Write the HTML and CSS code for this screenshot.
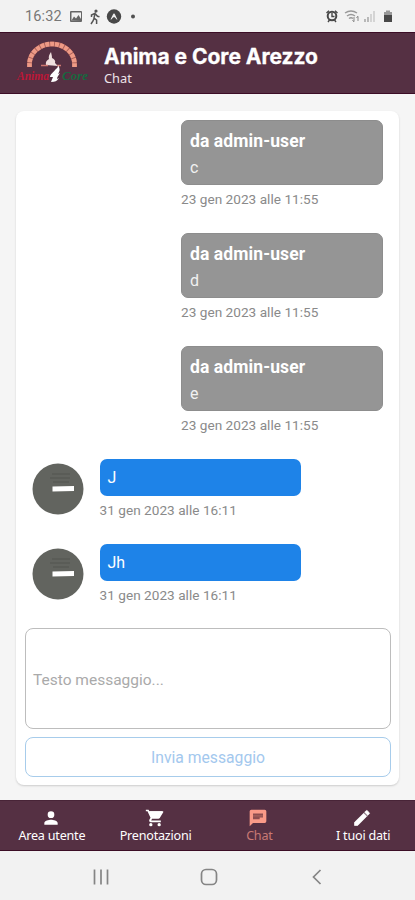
FILE: index.html
```html
<!DOCTYPE html>
<html lang="it">
<head>
<meta charset="utf-8">
<meta name="viewport" content="width=device-width, initial-scale=1">
<title>Anima e Core Arezzo</title>
<link rel="stylesheet" href="styles.css">
</head>
<body>
<div class="status">
  <span class="clock">16:32</span>
  <svg class="status-left" width="70" height="18" viewBox="0 0 70 18">
    <path fill="#666" fill-rule="evenodd" d="M2 3h10q1 0 1 1v9q0 1-1 1H2q-1 0-1-1V4q0-1 1-1zM2.500 4.500v8h9.500v-8z"/>
    <path d="M2.500 12.500 5 8.500l2 2L9.500 7l2.500 4v2z" fill="#666"/>
    <circle cx="27" cy="3" r="1.600" fill="#555"/>
    <path d="M22.500 9V7l3.500-1.700L25 10l2.600 2.200V16M25 10.500 24 13l-2 3M26.500 6l2 2.300 2 .5" fill="none" stroke="#555" stroke-width="1.500"/>
    <circle cx="45" cy="8.500" r="7.200" fill="#484848"/>
    <path d="M41.500 11.500C43.500 8 44 5.500 45 5.500s1.500 2.500 3.500 6c-1.500.5-2-2.500-3.500-2.500s-2 3-3.500 2.500z" fill="#eee"/>
    <circle cx="64" cy="8.500" r="2" fill="#505050"/>
  </svg>
  <svg class="status-right" width="70" height="18" viewBox="0 0 70 18">
    <circle cx="7" cy="8" r="4.300" fill="none" stroke="#484848" stroke-width="2"/>
    <path d="M7 5v3.500h2.500M1.500 5 4 2.700M12.500 5 10 2.700M3 14l1.500-2M11 14l-1.500-2" fill="none" stroke="#484848" stroke-width="1.400"/>
    <path d="M20 5q6-4 12 0M22 8q4-3 8 0M24 10.500q2-1.500 4 0" fill="none" stroke="#999" stroke-width="1.500"/>
    <path d="M29 9v4.500M27.500 12l1.500 2M33 13V8.500M31.500 10 33 8" fill="none" stroke="#888"/>
    <path d="M40 14v-3M43 14V9" stroke="#aaa" stroke-width="1.600"/><path d="M46 14V6M49 14V3" stroke="#ccc" stroke-width="1.600"/>
    <path d="M59 4h2V2.500h4V4h2v4h-8z" fill="#999"/><path d="M59 7h8v7h-8z" fill="#484848"/>
  </svg>
</div>
<header class="header">
  <svg class="logo" width="76" height="46" viewBox="0 0 76 46">
    <path d="M13.500 27V24a22.500 20 0 0 1 45 0v3" fill="none" stroke="#a95e57" stroke-width="5"/>
    <path d="M13.500 27V24a22.500 20 0 0 1 45 0v3" fill="none" stroke="#ee9a86" stroke-width="4.600" stroke-dasharray="4 .9"/>
    <path d="M30 25q-1-4 3-6-1-3 2-7 1 4 1 6 4 2 3 5l3 3z" fill="#efe0df"/>
    <path d="M25 25.500h7M41 25.500h4" stroke="#ce7770" stroke-width="1.300"/>
    <text x="1" y="40" class="logo-red" textLength="32" lengthAdjust="spacingAndGlyphs">Anima</text>
    <text x="46" y="40" class="logo-green" textLength="26" lengthAdjust="spacingAndGlyphs">Core</text>
    <path d="M42 25c3 5 1 7 0 9l2-1c-2 3-3 4-3 6l2-1c-2 3-4 4-8 4l2-5h-3c0-3 4-5 5-7 2-2 3-2 3-5z" fill="#fff"/>
  </svg>
  <div class="titles">
    <h1>Anima e Core Arezzo</h1>
    <p>Chat</p>
  </div>
</header>
<main class="main">
  <section class="card">
    <div class="messages">
      <article class="sent"><div class="bubble grey"><strong>da admin-user</strong><span>c</span></div><time>23 gen 2023 alle 11:55</time></article>
      <article class="sent"><div class="bubble grey"><strong>da admin-user</strong><span>d</span></div><time>23 gen 2023 alle 11:55</time></article>
      <article class="sent"><div class="bubble grey"><strong>da admin-user</strong><span>e</span></div><time>23 gen 2023 alle 11:55</time></article>
      <article class="received">
        <svg class="avatar" width="52" height="52" viewBox="0 0 52 52"><circle cx="26" cy="26" r="25.500" fill="#62645f"/><path d="M20 11h18M18 15h20M21 19h16" stroke="#535550" stroke-width="1.200"/><path d="M20.500 23.500 42 23V28L20.500 28.500z" fill="#fff"/></svg>
        <div><div class="bubble blue">J</div><time>31 gen 2023 alle 16:11</time></div>
      </article>
      <article class="received">
        <svg class="avatar" width="52" height="52" viewBox="0 0 52 52"><circle cx="26" cy="26" r="25.500" fill="#62645f"/><path d="M20 11h18M18 15h20M21 19h16" stroke="#535550" stroke-width="1.200"/><path d="M20.500 23.500 42 23V28L20.500 28.500z" fill="#fff"/></svg>
        <div><div class="bubble blue">Jh</div><time>31 gen 2023 alle 16:11</time></div>
      </article>
    </div>
    <div class="field">Testo messaggio...</div>
    <button class="send" type="button">Invia messaggio</button>
  </section>
</main>
<nav class="tabs">
  <a class="tab"><svg width="20" height="20" viewBox="0 0 24 24"><path d="M12 12a4 4 0 1 0 0-8 4 4 0 0 0 0 8zm0 2c-2.700 0-8 1.300-8 4v2h16v-2c0-2.700-5.300-4-8-4z"/></svg><span>Area utente</span></a>
  <a class="tab"><svg width="20" height="20" viewBox="0 0 24 24"><path d="M7 18a2 2 0 1 0 0 4 2 2 0 0 0 0-4zM1 2v2h2l3.600 7.600L5.200 14c-.7 1.300.3 3 1.800 3h12v-2H7.400l1.100-2h7.500c.7 0 1.400-.4 1.700-1L21.900 5c.3-.7-.1-1-.9-1H5.200L4.300 2H1zm16 16a2 2 0 1 0 0 4 2 2 0 0 0 0-4z"/><path d="M5 4h16l-4 8H8z"/></svg><span>Prenotazioni</span></a>
  <a class="tab active"><svg width="20" height="20" viewBox="0 0 24 24"><path d="M20 2H4a2 2 0 0 0-2 2v18l4-4h14a2 2 0 0 0 2-2V4a2 2 0 0 0-2-2z"/><path d="M6 6.500h12v5h-4v2H6z" fill="#8e4e50"/><path d="M6 9.500h12" stroke="#b56d66"/></svg><span>Chat</span></a>
  <a class="tab"><svg width="20" height="20" viewBox="0 0 24 24"><path d="M3 17.200V21h3.800L17.800 9.900l-3.700-3.700L3 17.200zM20.700 7a1 1 0 0 0 0-1.400l-2.300-2.300a1 1 0 0 0-1.400 0l-1.900 1.800 3.800 3.800L20.700 7z" stroke="currentColor" stroke-width=".8"/></svg><span>I tuoi dati</span></a>
</nav>
<footer class="system">
  <svg width="18" height="18" viewBox="0 0 18 18"><path d="M2.500 1.500v15M9 1.500v15M15.500 1.500v15"/></svg>
  <svg width="18" height="18" viewBox="0 0 18 18"><rect x="1.500" y="1.500" width="15" height="15" rx="4.500"/></svg>
  <svg width="18" height="18" viewBox="0 0 18 18"><path d="M12.500 2 5.500 9l7 7"/></svg>
</footer>
</body>
</html>
```
FILE: styles.css
```css
* { box-sizing: border-box; }
body { margin: 0; height: 900px; display: flex; flex-direction: column; background: #f5f5f5; font-family: Roboto, sans-serif; overflow: hidden; }
.status { height: 32px; flex: none; display: flex; align-items: center; background: #f2f2f2; padding: 1px 20px 0 25px; }
.clock { font-size: 14.5px; letter-spacing: .15px; color: #777; width: 44px; }
.status-right { margin-left: auto; }
.header { height: 62px; flex: none; display: flex; background: #553043; border-top: 1px solid #3c0d26; border-bottom: 1px solid #3c0d26; color: #fff; padding-left: 16px; }
.logo { margin-top: 7px; flex: none; }
.logo-red, .logo-green { font: italic bold 12px "Liberation Serif", serif; }
.logo-red { fill: #bd1737; }
.logo-green { fill: #17683f; }
.titles { padding: 11px 0 0 12px; }
h1 { margin: 0; font: 700 21px/26px Inter, sans-serif; letter-spacing: -.03px; white-space: nowrap; -webkit-text-stroke: .3px #fff; }
.titles p { margin: 0; font: 12.8px/17px "Noto Sans", sans-serif; color: #eee3e9; }
.main { flex: 1; padding: 17px 16px 16px; min-height: 0; }
.card { height: 674px; display: flex; flex-direction: column; background: #fff; border-radius: 8px; padding: 9px 8px 8px; box-shadow: 0 1px 2px #ccc; }
.messages { flex: 1; padding: 0 8px; }
.sent { width: 202px; height: 113px; margin-left: auto; }
.bubble { border-radius: 7px; color: #fff; width: 202px; }
.grey { height: 65px; background: #959595; padding: 8px 8px 0; display: flex; flex-direction: column; border: 1px solid #8d8d8d; }
.grey strong { font-size: 17.5px; line-height: 24px; letter-spacing: .1px; }
.grey span { font-size: 16px; line-height: 29px; color: #f1f1f1; }
time { display: block; font-size: 13.6px; line-height: 18px; margin-top: 5px; color: #8a8a8a; white-space: nowrap; letter-spacing: .03px; }
.received { display: flex; height: 84.500px; gap: 15.500px; }
.avatar { margin-top: 4px; flex: none; }
.blue { width: 201px; height: 37px; background: #1e83e8; font-size: 16px; line-height: 38px; padding-left: 8px; }
.field { height: 101px; margin-left: 1px; border: 1.500px solid #bdbdbd; border-radius: 8px; font-size: 15.500px; line-height: 102px; color: #aaa; padding-left: 7px; }
.send { height: 40px; margin: 8px 0 0 1px; padding-top: 2px; background: #fff; border: 1px solid #a7cceb; border-radius: 8px; color: #a3c8ee; font: 15.7px Roboto, sans-serif; }
.tabs { height: 51px; flex: none; display: grid; grid-template-columns: repeat(4, 1fr); background: #553043; border-top: 1px solid #482437; border-bottom: 1px solid #3c0d26; }
.tab { display: flex; flex-direction: column; align-items: center; color: #fff; font: 12.6px/16px "Noto Sans", sans-serif; letter-spacing: -.22px; padding-top: 7px; white-space: nowrap; }
.tab svg { fill: currentColor; flex: none; margin-right: 2px; }
.active { color: #fa9a88; }
.active span { color: #c87974; }
.system { height: 49px; flex: none; display: flex; align-items: center; justify-content: space-between; background: #f2f2f2; padding: 3px 89px 0 92px; }
.system svg { fill: none; stroke: #858585; stroke-width: 1.700; }
```
